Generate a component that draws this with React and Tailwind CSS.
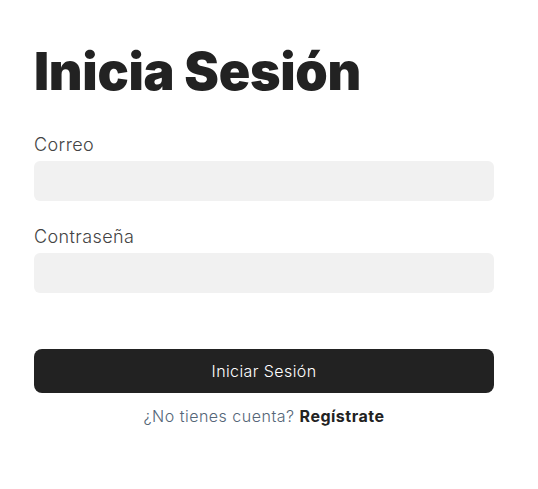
import React, { useState } from "react";

const App = () => {
  const [email, setEmail] = useState("");
  const [password, setPassword] = useState("");

  return (
    <div className="min-h-screen bg-white px-[34px] pt-[40px] font-['Inter',sans-serif] text-[#222]">
      <div className="w-[460px]">
        <h1 className="text-[52px] font-black leading-[64px] tracking-[-0.3px]">Inicia Sesión</h1>

        <form className="mt-[30px] flex flex-col" onSubmit={(e) => e.preventDefault()}>
          <label className="text-[18px] font-light leading-[22px] tracking-[0.4px] text-[#444]">Correo</label>
          <input
            type="email"
            value={email}
            onChange={(e) => setEmail(e.target.value)}
            className="mt-[5px] h-[40px] w-full rounded-[6px] bg-[#f1f1f1] px-3 outline-none"
          />

          <label className="mt-[25px] text-[18px] font-light leading-[22px] tracking-[0.4px] text-[#444]">Contraseña</label>
          <input
            type="password"
            value={password}
            onChange={(e) => setPassword(e.target.value)}
            className="mt-[5px] h-[40px] w-full rounded-[6px] bg-[#f1f1f1] px-3 outline-none"
          />

          <button
            type="submit"
            className="mt-[56px] h-[44px] w-full rounded-[8px] bg-[#222] text-[16px] font-light tracking-[0.4px] text-white"
          >
            Iniciar Sesión
          </button>

          <p className="mt-[11px] text-center text-[16px] font-light tracking-[0.5px] text-[#556677]">
            ¿No tienes cuenta? <a href="#" className="font-bold text-[#222]">Regístrate</a>
          </p>
        </form>
      </div>
    </div>
  );
};

export default App;
